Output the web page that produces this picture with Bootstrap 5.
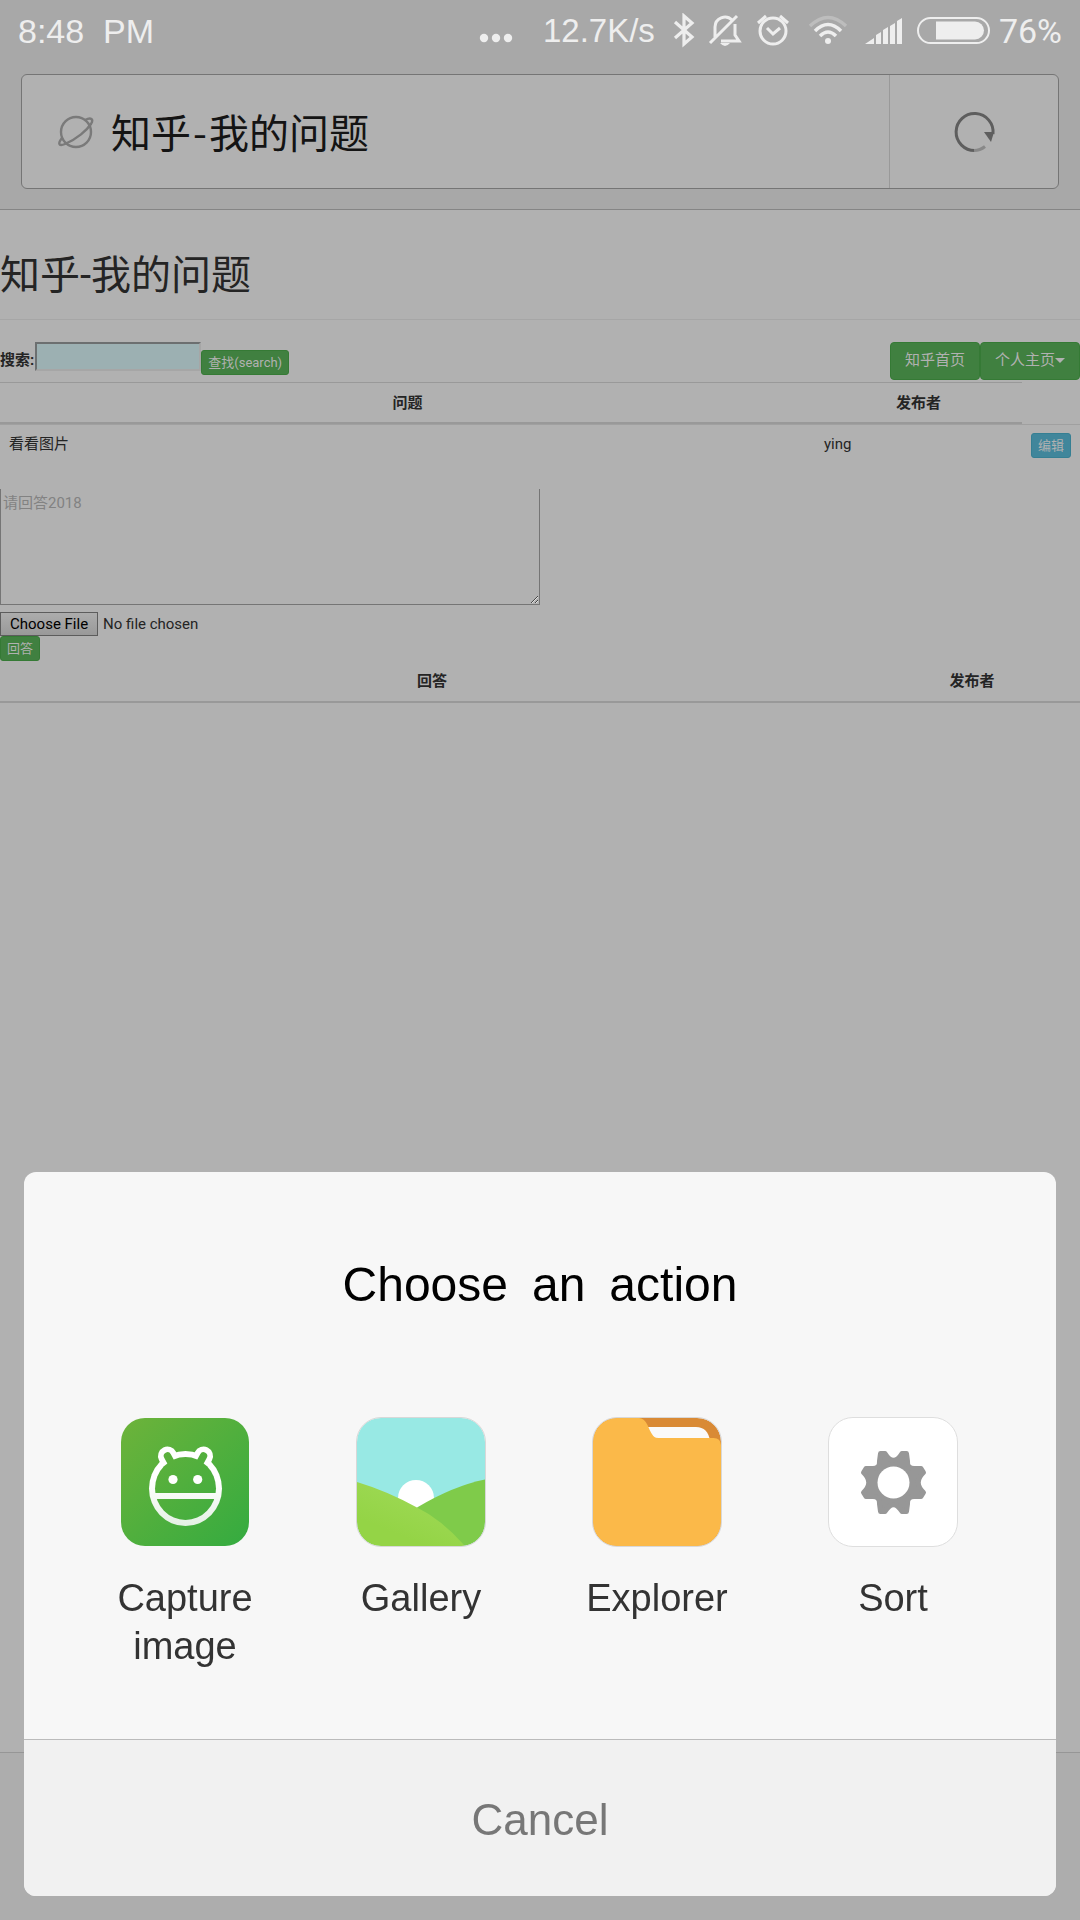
<!DOCTYPE html>
<html lang="zh-CN">
<head>
<meta charset="utf-8">
<meta name="viewport" content="width=device-width, initial-scale=1">
<title>知乎-我的问题</title>
<link href="https://cdn.jsdelivr.net/npm/bootstrap@5.3.0/dist/css/bootstrap.min.css" rel="stylesheet">
<style>
  body { background: #b1b1b1; color: #242424; font: 15px/22px Roboto, "Noto Sans CJK SC", sans-serif; }
  .chrome-top { background: #a8a8a8; border-bottom: 1px solid #858585; padding: 0 21px 20px; }
  .status { height: 74px; padding-bottom: 12px; margin: 0 -3px; color: #eee; font: 34px/40px "Liberation Sans", sans-serif; }
  .status svg { flex: none; }
  .net-speed { font-size: 33px; }
  .battery-text { font-family: Roboto, sans-serif; }
  .address { height: 115px; background: #b1b1b1; border: 1px solid #757575; border-radius: 6px; }
  .address-title { font: 40px/56px "Noto Sans CJK SC", sans-serif; color: #141414; padding-bottom: 2px; }
  .dash { margin: 0 2px; }
  .planet { flex: none; margin-left: 16px; }
  .reload { width: 169px; border: 0; border-left: 1px solid #999; background: none; }
  .page-title { font-size: 40px; line-height: 56px; font-weight: 400; padding: 38px 0 15px; margin: 0 0 22px; border-bottom: 1px solid #a6a6a6; }
  .tools { height: 40px; }
  .search-label { font-weight: 700; margin-top: 7px; padding-right: 1px; }
  .search-box { width: 166px; height: 29px; background: #9cb0b2; border: 2px solid; border-color: #6c6f70 #a6a6a6 #a6a6a6 #6c6f70; }
  .btn-leaf { --bs-btn-bg: #408040; --bs-btn-border-color: #357a35; --bs-btn-color: #b1b1b1; --bs-btn-hover-bg: #387438; --bs-btn-hover-color: #b1b1b1; }
  .btn-sky { --bs-btn-bg: #40869b; --bs-btn-border-color: #357f93; --bs-btn-color: #b1b1b1; --bs-btn-hover-bg: #387a8e; --bs-btn-hover-color: #b1b1b1; }
  .btn-tiny { font-size: 13px; line-height: 19px; padding: 2px 6px; border-radius: 3px; }
  .search-btn { margin-top: 8px; }
  .btn-nav { font-size: 15px; line-height: 22px; padding: 6px 14px 8px; border-radius: 4px; }
  .btn-nav.dropdown-toggle::after { margin-left: 0; border-width: 5px; border-bottom: 0; vertical-align: 2px; }
  .data-table { width: 100%; table-layout: fixed; border-collapse: separate; border-spacing: 0; }
  .data-table th { text-align: center; font-weight: 700; padding: 8px 9px; height: 42px; border-bottom: 2px solid #999; }
  .data-table td { padding: 8px 9px; border-top: 1px solid #a0a0a0; vertical-align: top; }
  .data-table .topped th { border-top: 1px solid #999; }
  .data-table .blank { border: 0; }
  .answer-box { width: 50%; height: 116px; margin-top: 23px; padding: 3px 2px; background: none; border: 1px solid #757575; border-top: 0; line-height: 22px; }
  .answer-box::placeholder { color: #828282; }
  .file-box { height: 24px; margin-top: 7px; line-height: 22px; }
  .file-box::file-selector-button { height: 24px; padding: 0 9px; border: 1px solid #5c5c5c; background: linear-gradient(#acacac, #999); color: #000; margin-right: 5px; line-height: 20px; }
  .bottom-bar { height: 168px; border-top: 1px solid #969696; background: #adadad; }
  .sheet { left: 24px; right: 24px; bottom: 24px; background: #f7f7f7; border-radius: 12px; overflow: hidden; font-family: "Liberation Sans", sans-serif; z-index: 10; }
  .sheet-title { font-size: 48px; line-height: 60px; color: #000; font-weight: 400; padding: 83px 0 0; margin: 0 0 102px; }
  .choices { padding: 0 45px 0 43px; height: 322px; }
  .choice { border: 0; background: none; padding: 0 36px; color: #333; font-size: 38px; line-height: 48px; }
  .choice svg { display: block; margin: 0 auto 27px; }
  .cancel { border: 0; border-top: 1px solid #bbb; background: #f1f1f1; color: #777; font-size: 44px; line-height: 60px; padding: 50px 0 46px; }
</style>
<script src="https://cdn.jsdelivr.net/npm/bootstrap@5.3.0/dist/js/bootstrap.bundle.min.js"></script>
</head>
<body class="d-flex flex-column min-vh-100">
<header class="chrome-top">
  <div class="status d-flex align-items-center">
    <span class="me-auto">8:48&nbsp; PM</span>
    <svg class="me-4" width="36" height="40" viewBox="0 0 36 40" fill="#eee"><circle cx="5" cy="27" r="4.200"/><circle cx="17" cy="27" r="4.200"/><circle cx="29" cy="27" r="4.200"/></svg>
    <span class="net-speed ms-1">12.7K/s</span>
    <svg class="ms-3" width="28" height="36" viewBox="-1 0 28 36" fill="none" stroke="#eee" stroke-width="3.200"><path d="M3 9 20 24 12 31V3L20 10 3 25"/></svg>
    <svg class="ms-2 me-1" width="36" height="36" viewBox="0 0 36 36" fill="none" stroke="#eee" stroke-width="3"><path d="M8 24V14a10 10 0 0 1 17-7M28 11v11l4 6H14M3 30 30 3"/><path d="M13 30h10q-5 6-10 0z" fill="#eee" stroke="none"/></svg>
    <svg class="ms-2 me-2" width="36" height="36" viewBox="0 0 36 36" fill="none" stroke="#eee" stroke-width="3"><circle cx="18" cy="18" r="13"/><path d="m12 15 6 6 7-6M3 10l8-7M33 10l-8-7"/></svg>
    <svg class="ms-2" width="42" height="36" viewBox="0 0 42 36" fill="none" stroke="#eee" stroke-width="3.500"><path d="M3 13q18-17 36 0" stroke="#bdbdbd"/><path d="M8 18q13-13 26 0M13 23q8-8 16 0"/><circle cx="21" cy="28" r="3" fill="#eee" stroke="none"/></svg>
    <svg class="ms-3 me-1" width="38" height="36" viewBox="0 0 38 36" fill="#eee"><path d="M0 31 9 25v6zM11 22l5-3v12h-5zM18 17l5-3v17h-5zM25 13l5-3v21h-5zM32 8l5-3v26h-5z"/></svg>
    <svg class="ms-2 me-2" width="76" height="28" viewBox="0 0 76 28"><rect x="3" y="1" width="71" height="25" rx="12.500" fill="none" stroke="#eee" stroke-width="2"/><path d="M21 4.500h39a9 9 0 0 1 0 18H21z" fill="#eee"/></svg>
    <span class="battery-text">76%</span>
  </div>
  <div class="address d-flex">
    <div class="d-flex align-items-center flex-grow-1">
      <svg class="planet" width="73" height="40" viewBox="0 0 73 40" fill="none" stroke="#7a7a7a" stroke-width="2.400"><circle cx="38" cy="20" r="15"/><path d="M47 8c6-3 9-1 6 4C49 18 39 27 27 32c-7 3-7-1-3-6"/></svg>
      <span class="address-title">知乎<span class="dash">-</span>我的问题</span>
    </div>
    <button class="reload" type="button" aria-label="Reload">
      <svg width="44" height="44" viewBox="0 0 44 44"><path d="M41 24A18.500 18.500 0 1 0 23 40.500" fill="none" stroke="#5e5e5e" stroke-width="3"/><path d="M22 40.500q6 0 11-4" fill="none" stroke="#888" stroke-width="3"/><path d="M32 22h10l-3 10z" fill="#5e5e5e"/></svg>
    </button>
  </div>
</header>

<main class="flex-grow-1">
  <h1 class="page-title">知乎-我的问题</h1>
  <div class="tools d-flex align-items-start justify-content-between">
    <form class="d-flex align-items-start">
      <label class="search-label" for="q">搜索:</label>
      <input class="search-box" id="q" type="text">
      <button class="btn btn-leaf btn-tiny search-btn" type="button">查找(search)</button>
    </form>
    <nav class="d-flex">
      <button class="btn btn-leaf btn-nav" type="button">知乎首页</button>
      <button class="btn btn-leaf btn-nav dropdown-toggle" type="button">个人主页</button>
    </nav>
  </div>
  <table class="data-table">
    <colgroup><col><col style="width:207px"><col style="width:58px"></colgroup>
    <thead><tr class="topped"><th>问题</th><th>发布者</th><td class="blank"></td></tr></thead>
    <tbody><tr><td>看看图片</td><td>ying</td><td><button class="btn btn-sky btn-tiny" type="button">编辑</button></td></tr></tbody>
  </table>
  <form>
    <textarea class="answer-box d-block" placeholder="请回答2018" aria-label="请回答2018"></textarea>
    <input class="file-box d-block" type="file" aria-label="Choose File">
    <button class="btn btn-leaf btn-tiny d-block" type="button">回答</button>
  </form>
  <table class="data-table">
    <colgroup><col><col style="width:20%"></colgroup>
    <thead><tr><th>回答</th><th>发布者</th></tr></thead>
  </table>
</main>
<footer class="bottom-bar"></footer>

<section class="sheet position-fixed" role="dialog" aria-labelledby="sheet-title">
  <h2 class="sheet-title text-center" id="sheet-title">Choose&ensp;an&ensp;action</h2>
  <div class="choices row g-0">
    <button class="choice col-3 d-flex flex-column align-items-center" type="button">
      <svg width="130" height="130" viewBox="-1 -1 130 130">
        <defs>
          <linearGradient id="leaf" x1="0" y1="0" x2="1" y2="1"><stop stop-color="#6db33a"/><stop offset="1" stop-color="#34ab40"/></linearGradient>
          <linearGradient id="shine" x1="0" y1="0" x2="0" y2="1"><stop offset=".5" stop-color="#fff"/><stop offset=".85" stop-color="#e4f0e4"/></linearGradient>
          <mask id="robot"><g stroke-linecap="round"><ellipse cx="64.500" cy="70.500" rx="36.500" ry="37.500" fill="#fff"/><path d="M46.500 38l4 8M82.500 38l-4 8" stroke="#fff" stroke-width="19"/><ellipse cx="64.500" cy="70.500" rx="30.500" ry="31.500"/><path d="M46.500 38l6 11M82.500 38l-6 11" stroke="#000" stroke-width="7.500"/></g><path d="M31 75h67v6H31z" fill="#fff"/><circle cx="52" cy="61.500" r="4.600" fill="#fff"/><circle cx="76.700" cy="61.500" r="4.600" fill="#fff"/></mask>
        </defs>
        <rect width="128" height="128" rx="24" fill="url(#leaf)"/><rect width="128" height="128" fill="url(#shine)" mask="url(#robot)"/>
      </svg>
      <span>Capture image</span>
    </button>
    <button class="choice col-3 d-flex flex-column align-items-center" type="button">
      <svg width="130" height="130" viewBox="-1 -1 130 130">
        <defs><clipPath id="tile"><rect width="128" height="128" rx="24"/></clipPath><linearGradient id="hill" x1="0" y1="1" x2=".7" y2="0"><stop offset=".3" stop-color="#94d446"/><stop offset="1" stop-color="#a0da58"/></linearGradient></defs>
        <g clip-path="url(#tile)"><path fill="#98e9e4" d="M0 0h128v128H0z"/><circle cx="59" cy="80" r="18" fill="#fff"/><path fill="#7fcb4a" d="M128 61.500Q96 68 60 89.500L80 128h48z"/><path fill="url(#hill)" d="M0 64Q30 73 60 89.500 84 101 108 128H0z"/></g>
        <rect x="-.5" y="-.5" width="129" height="129" rx="24.500" fill="none" stroke="#d8d8d8"/>
      </svg>
      <span>Gallery</span>
    </button>
    <button class="choice col-3 d-flex flex-column align-items-center" type="button">
      <svg width="130" height="130" viewBox="-1 -1 130 130">
        <g clip-path="url(#tile)"><path fill="#d98a35" d="M0 0h128v128H0z"/><path fill="#fafafa" d="M50 9h53q12 0 14 14H50z"/><path fill="#fbb949" d="M0 0h46q5 0 8.500 7 4 10 7 12 1 1 4 1h55q7 0 7.500 7v101H0z"/></g>
        <rect x="-.5" y="-.5" width="129" height="129" rx="24.500" fill="none" stroke="#d8d8d8"/>
      </svg>
      <span>Explorer</span>
    </button>
    <button class="choice col-3 d-flex flex-column align-items-center" type="button">
      <svg width="130" height="130" viewBox="-1 -1 130 130">
        <rect x="-.5" y="-.5" width="129" height="129" rx="24.500" fill="#fff" stroke="#dedede"/>
        <path fill="#979797" stroke="#979797" stroke-width="5" stroke-linejoin="round" fill-rule="evenodd" d="M51.500 35.500L56 35.500Q64.500 49 73 35.500L77.500 35.500 78.500 43Q78 51 86 50.500L92 50.500 94.500 54.500Q84 64.500 94.500 74.500L92 78.500 86 78.500Q78 78 78.500 86L77.500 93.500 73 93.500Q64.500 80 56 93.500L51.500 93.500 50.500 86Q51 78 43 78.500L37 78.500 34.500 74.500Q45 64.500 34.500 54.500L37 50.500 43 50.500Q51 51 50.500 43z"/><circle cx="64.500" cy="64.500" r="16" fill="#fff"/>
      </svg>
      <span>Sort</span>
    </button>
  </div>
  <button class="cancel d-block w-100" type="button">Cancel</button>
</section>
</body>
</html>
